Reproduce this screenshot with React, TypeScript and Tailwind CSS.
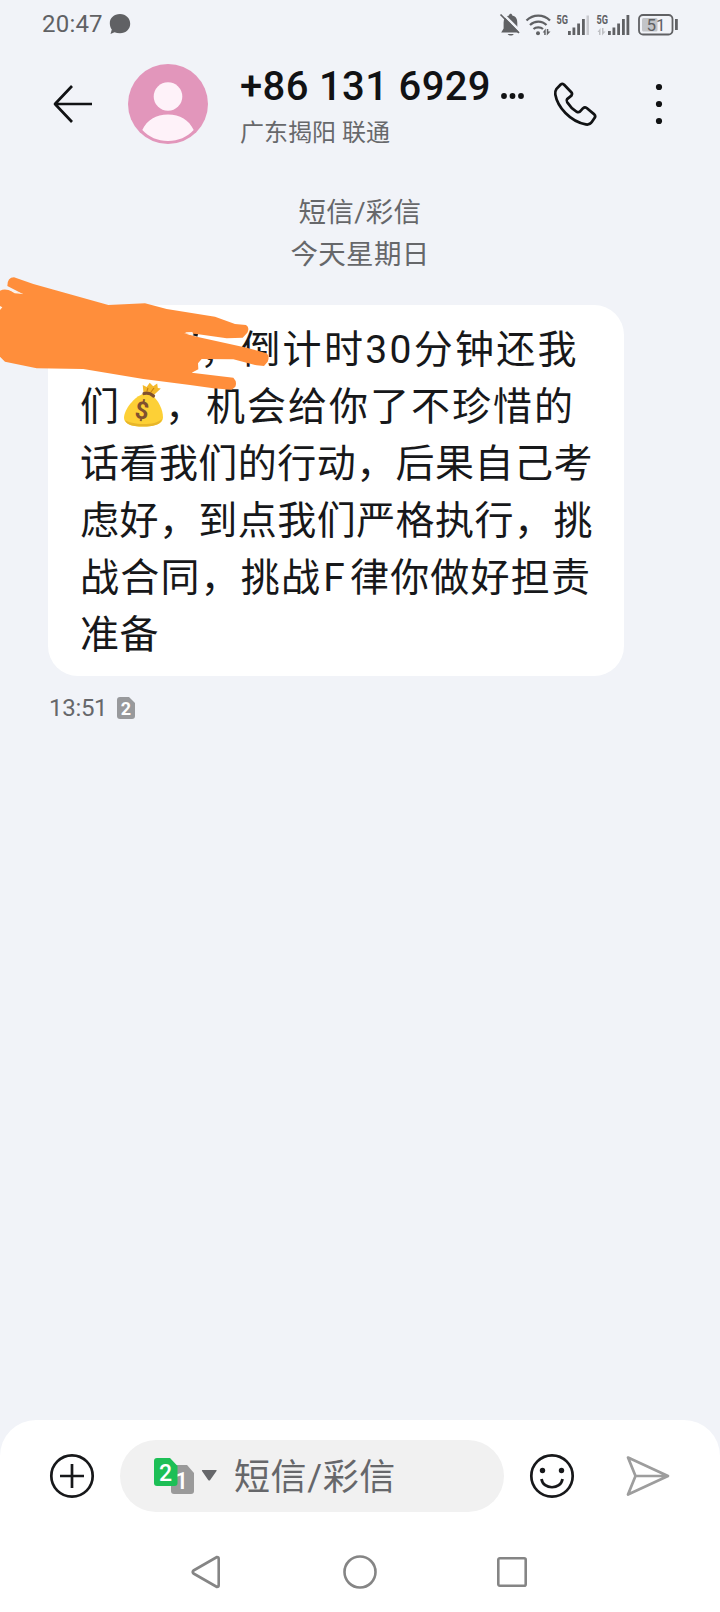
import type { ReactNode } from "react";

function StatusBar() {
  return (
    <div className="flex h-12 items-center pl-[42px] pr-[41px] text-[#606164]">
      <span className="text-[24px] leading-6 tracking-[0.2px]">20:47</span>
      <svg className="ml-[6px]" width="22" height="22" viewBox="0 0 22 22" fill="currentColor">
        <path d="M11 1C5 1 .8 5 .8 10.200c0 3 1 5 2 6.300L1.500 21l4-1.700c1.700.7 3.500 1 5.500 1 6 0 10.200-4.200 10.200-9.500S17 1 11 1Z" />
      </svg>
      <svg className="ml-auto" width="180" height="28" viewBox="0 0 180 28" fill="currentColor">
        {/* muted bell */}
        <path d="M10 5.500c.3-2.200 3-2.200 3.300 0 4 .9 5 3.800 5 7.200v5.800l1.900 4H2.200l2.400-4v-6c0-3.800 1.800-6.300 5.400-7Z" />
        <path d="M8.700 24h6c-.8 2-5.200 2-6 0Z" />
        <path d="M2.500 2.500 21.500 21.500" stroke="#f1f3f8" strokeWidth="2.500" />
        <path d="M1.500 4.500 20 23" stroke="currentColor" strokeWidth="1.700" />
        {/* wifi */}
        <g fill="none" stroke="currentColor" strokeWidth="2.200">
          <path d="M27.500 10.500c6.500-6.600 17-6.600 23.500 0" />
          <path d="M31 15c4.700-4.600 12-4.600 16.500 0" />
          <path d="M34.500 19c2.500-2.300 7-2.300 9.500 0" />
        </g>
        <circle cx="39" cy="23.200" r="2" />
        <path d="m43.700 22.500 3-4V25h-1.500v-2.500ZM47.800 19h1.500v2.500h2.200l-3.700 4Z" />
        {/* first sim signal */}
        <text x="57.500" y="14" fontSize="13" fontWeight="700" textLength="11.500" lengthAdjust="spacingAndGlyphs">5G</text>
        <path d="M69 21h2.800v4H69zM73.500 17.500h2.800V25h-2.800zM78.200 13.500H81V25h-2.800zM83 9h2.800v16H83z" />
        <path d="M87.500 5.500h2.500V25h-2.500z" opacity=".28" />
        {/* second sim signal */}
        <text x="97.500" y="14" fontSize="13" fontWeight="700" textLength="11.500" lengthAdjust="spacingAndGlyphs">5G</text>
        <path d="m98.500 22 3-4v7H100v-3ZM103 18h1.500v3.500h2l-3.500 4Z" opacity=".35" />
        <path d="M109 21h2.800v4H109zM113.500 17.500h2.800V25h-2.800zM118.200 13.500h2.800V25h-2.800zM123 9h2.800v16H123zM127.500 5h2.800v20h-2.800z" />
        {/* battery */}
        <rect x="140" y="5" width="33.500" height="19.500" rx="4" fill="none" stroke="currentColor" strokeWidth="1.800" />
        <rect x="143" y="8" width="15.500" height="13.500" rx="1.500" opacity=".32" />
        <path d="M176 9h2.800v11H176z" />
        <text x="157" y="20.500" fontSize="17" textAnchor="middle">51</text>
      </svg>
    </div>
  );
}

function Header() {
  return (
    <header className="flex h-28 items-center text-[#111214]">
      <svg className="ml-[52px] shrink-0" width="42" height="42" viewBox="0 0 42 42" fill="none" stroke="currentColor" strokeWidth="2.700">
        <path d="M20 3 3 21l17 18M3 21h37" strokeLinejoin="round" />
      </svg>
      <svg className="ml-[34px] shrink-0" width="80" height="80" viewBox="0 0 80 80">
        <circle cx="40" cy="40" r="40" fill="#e296bb" />
        <circle cx="40" cy="32.500" r="14.300" fill="#fef2f9" />
        <path d="M14.300 66C19 56 28 50.500 40 50.500S61 56 65.700 66C59 73 50.500 77 40 77s-19-4-25.700-11Z" fill="#fef2f9" />
      </svg>
      <div className="ml-8 w-[288px] shrink-0 pt-[7px]">
        <div className="flex h-[44px] items-center whitespace-nowrap text-[40px] font-medium tracking-[0.350px]">
          <span>+86 131 6929</span>
          <svg className="ml-[9px] mt-[18px]" width="26" height="8" viewBox="0 0 26 8" fill="currentColor">
            <circle cx="4" cy="4" r="2.900" />
            <circle cx="12.500" cy="4" r="2.900" />
            <circle cx="21" cy="4" r="2.900" />
          </svg>
        </div>
        <div className="mt-[7px] h-[34px] whitespace-nowrap text-[24px] leading-[34px] text-[#67686b]">广东揭阳 联通</div>
      </div>
      <svg className="ml-[25px] shrink-0" width="46" height="46" viewBox="0 0 46 46" fill="none" stroke="currentColor" strokeWidth="2.700" strokeLinejoin="round">
        <path d="M3.300 8.200 7.700 3.500q1.500-1.200 3.200 0l7.400 7.700q1.400 1.700.1 3.400l-4.300 3.500q-1 1.300.1 3.200c2.500 4 5.400 7 9.200 9.300q2 1.200 3.500.1l3.200-3.500q1.700-1.500 3.600-.2l7.600 6.400q1.700 1.700.2 3.700l-2.700 4q-2 3-6 2.300C17 40.500 4.500 26 2.300 13.500q-.5-3.200 1-5.300Z" />
      </svg>
      <svg className="ml-[54px] shrink-0" width="12" height="42" viewBox="0 0 12 42" fill="currentColor">
        <circle cx="6" cy="4" r="3.100" />
        <circle cx="6" cy="21" r="3.100" />
        <circle cx="6" cy="38" r="3.100" />
      </svg>
    </header>
  );
}

function MoneyBag() {
  return (
    <svg className="mb-[5px] ml-[2px] mr-px inline-block shrink-0" width="41" height="46" viewBox="0 0 41 46">
      <path d="m20.500 11-.8-8 4 2 3-4.300 3.500 3.500 4-2.700.6 4.500 3 .5-8.500 8Z" fill="#f4b92b" />
      <path d="m24 9 1-3m3 4 3-4" stroke="#c98412" strokeWidth="1.200" />
      <path d="M20 12c-8 2.500-19 15-19 24 0 6 8 8.500 19 8.500S40 42 40 35.500C40 27 35 18 29 13c-3-1.800-6-1.800-9-1Z" fill="#fdd036" />
      <path d="M2 38c4 4 29 7 37-1-1 6-9 7.500-19 7.500S3.500 43 2 38Z" fill="#e8b62a" />
      <path d="M21 11.500q5-1.500 9.500 2.500" fill="none" stroke="#80502f" strokeWidth="3.200" strokeLinecap="round" />
      <text x="20" y="37" textAnchor="middle" fontSize="24" fontWeight="700" fill="#80502f" transform="rotate(8 20 29)">$</text>
    </svg>
  );
}

// Marker strokes over the start of the message
function Scribble() {
  return (
    <svg className="absolute left-0 top-[260px]" width="300" height="150" viewBox="0 0 900 450">
      <path d="M578 216h18l-4 14-14-4Z" fill="#17181a" />
      <path
        d="M0 92q12-6 25-2l45 13-48-25q0-26 20-26l58 20 225 63 110-5 65 17 145 23 60 22 33 3q12 7 4 23l-14 15-48 2-90-13-38-2 38 10 150 33 60 17q10 10 3 25l-11 13-22-2-70-18-95-1-11 13 1 18-20 10 125 15q12 12 6 27l-11 9-55-4-70-10-140-18-180-30-140-2-95-20-15-15Z"
        fill="#ff8e3b"
      />
      <path d="m24 88 46 14-26-2ZM0 138l7 4-7 8ZM555 217l22-1 4 8-10 1Z" fill="#fff3e8" />
    </svg>
  );
}

function Line({ children, className }: { children: ReactNode; className: string }) {
  return <div className={`flex h-[57px] items-center whitespace-nowrap ${className}`}>{children}</div>;
}

function Message() {
  return (
    <div className="ml-12 mt-[29px] h-[371px] w-[576px] rounded-[30px] bg-white pl-[32px] pt-[17px] text-[39px] leading-[57px] text-[#17181a]">
      <Line className="pl-[120px] tracking-[2.300px]">，倒计时30分钟还我</Line>
      <Line className="tracking-[2px]">
        <span>们</span>
        <MoneyBag />
        <span>，机会给你了不珍惜的</span>
      </Line>
      <Line className="tracking-[0.450px]">话看我们的行动，后果自己考</Line>
      <Line className="tracking-[0.450px]">虑好，到点我们严格执行，挑</Line>
      <Line className="tracking-[1.200px]">
        <span>战合同，挑战</span>
        <span className="pl-0.5 pr-1">F</span>
        <span>律你做好担责</span>
      </Line>
      <Line className="tracking-[0.450px]">准备</Line>
    </div>
  );
}

function Composer() {
  return (
    <footer className="mt-auto h-[192px] rounded-t-[36px] bg-white pt-5">
      <div className="flex h-[72px] items-center">
        <svg className="ml-[49px] shrink-0" width="46" height="46" viewBox="0 0 46 46" fill="none" stroke="#17181a" strokeWidth="2.700">
          <circle cx="23" cy="23" r="20.700" />
          <path d="M11 23h24M23 11v24" />
        </svg>
        <div className="ml-[25px] flex h-[72px] w-[384px] shrink-0 items-center rounded-full bg-[#f1f1f1] pl-[33px]">
          <svg width="43" height="38" viewBox="0 0 43 38" fontWeight="500" fill="#fff" textAnchor="middle">
            <path d="M21 8h13l7 8v18q0 3-3 3H21q-3 0-3-3V11q0-3 3-3Z" fill="#9a9a9a" />
            <text x="28.500" y="32" fontSize="24">1</text>
            <path d="M4 1h13l7.500 8v17q0 3-3 3H4q-3 0-3-3V4q0-3 3-3Z" fill="#1dbf56" />
            <text x="12.500" y="24" fontSize="23">2</text>
          </svg>
          <svg className="ml-[4px]" width="18" height="14" viewBox="0 0 18 14">
            <path d="M2.500 1h13.500q1.200 0 .5 1L10.200 11q-1 1-2 0L2 2q-.5-1 .5-1Z" fill="#66676a" />
          </svg>
          <span className="ml-[16px] pt-[3px] text-[36px] leading-[54px] tracking-[0.600px] text-[#66676a]">短信/彩信</span>
        </div>
        <svg className="ml-[25px] shrink-0" width="46" height="46" viewBox="0 0 46 46" fill="none" stroke="#17181a" strokeWidth="2.700">
          <circle cx="23" cy="23" r="20.700" />
          <circle cx="13.500" cy="17.500" r="2.700" fill="#17181a" stroke="none" />
          <circle cx="32.500" cy="17.500" r="2.700" fill="#17181a" stroke="none" />
          <path d="M12.500 26c1.500 11 19.500 11 21 0" />
        </svg>
        <svg className="ml-[50px] shrink-0" width="46" height="42" viewBox="0 0 46 42" fill="none" stroke="#9d9d9d" strokeWidth="2.700" strokeLinejoin="round">
          <path d="M3 2.500 43 21 3 39.500 10.500 21ZM10.500 21h33" />
        </svg>
      </div>
      <nav className="mt-[40px] flex h-10 items-center text-[#858585]">
        <svg className="ml-[190px]" width="32" height="36" viewBox="0 0 32 36" fill="none" stroke="currentColor" strokeWidth="2.600" strokeLinejoin="round">
          <path d="M27 3 3.500 16.500q-1.500 1.500 0 3L27 33q1.700 0 1.700-2V5q0-2-1.700-2Z" />
        </svg>
        <svg className="ml-[120px]" width="36" height="36" viewBox="0 0 36 36" fill="none" stroke="currentColor" strokeWidth="2.600">
          <circle cx="18" cy="18" r="15.500" />
        </svg>
        <svg className="ml-[118px]" width="32" height="32" viewBox="0 0 32 32" fill="none" stroke="currentColor" strokeWidth="2.600">
          <rect x="2.300" y="2.300" width="27.400" height="27.400" rx="1.500" />
        </svg>
      </nav>
    </footer>
  );
}

export default function App() {
  return (
    <div className="relative flex h-[1612px] w-[720px] flex-col overflow-hidden bg-[#f1f3f8] font-['Roboto','Noto_Sans_CJK_SC',sans-serif]">
      <StatusBar />
      <Header />
      <div className="pt-[32px] text-center text-[27.500px] leading-[42px] tracking-[0.300px] text-[#66676a]">
        <div>短信/彩信</div>
        <div>今天星期日</div>
      </div>
      <Message />
      <div className="ml-[49px] mt-[16px] flex h-8 items-center text-[#66676a]">
        <span className="text-[24px] leading-8 tracking-[-0.300px]">13:51</span>
        <svg className="ml-[9px]" width="20" height="24" viewBox="0 0 20 24">
          <path d="M4 1h9l6 6v13q0 3-3 3H4q-3 0-3-3V4q0-3 3-3Z" fill="#98999c" />
          <text x="10" y="18.500" fontSize="18" fontWeight="700" textAnchor="middle" fill="#fff">2</text>
        </svg>
      </div>
      <Composer />
      <Scribble />
    </div>
  );
}
